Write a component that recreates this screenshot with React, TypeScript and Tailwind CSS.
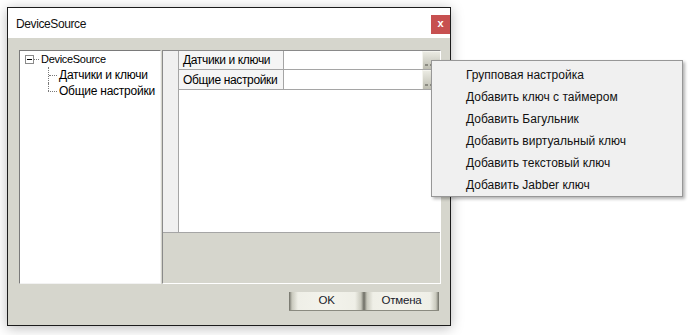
import React from "react";

const font = { fontFamily: '"Liberation Sans", Arial, sans-serif' };

const btnBg =
  "bg-[linear-gradient(to_right,#6d6d64_0px,#c9c9bd_3px,#efefe7_9px,#f3f3ec_50%,#efefe7_calc(100%-9px),#c9c9bd_calc(100%-3px),#6d6d64_100%)]";

function DialogButton({ label }: { label: string }) {
  return (
    <div
      className={`flex h-[19px] w-[75px] items-center justify-center border-b border-[#8a8a80] ${btnBg} text-[11.5px] tracking-[-0.2px] text-[#1a1a2a]`}
    >
      {label}
    </div>
  );
}

function EllipsisButton() {
  return (
    <div className="relative h-full w-[18px] border-l border-t border-[#f4f4ee] bg-[linear-gradient(to_bottom,#eaeae2,#bdbdb1)]">
      <div className="absolute bottom-[3px] left-[2px] flex gap-[2px]">
        <div className="h-[2px] w-[3px] border border-[#8c8c82]" />
        <div className="h-[2px] w-[3px] border border-[#8c8c82]" />
        <div className="h-[2px] w-[3px] border border-[#8c8c82]" />
      </div>
    </div>
  );
}

function GridRow({ name, h }: { name: string; h: string }) {
  return (
    <div className={`flex ${h} border-b border-[#a5a5a5]`}>
      <div className="flex w-[105px] items-center border-r border-[#a5a5a5] bg-[#f5f5f5] pl-[4px] text-[12px] tracking-[-0.35px] text-black">
        {name}
      </div>
      <div className="flex-1 bg-white" />
      <EllipsisButton />
    </div>
  );
}

const menuItems = [
  "Групповая настройка",
  "Добавить ключ с таймером",
  "Добавить Багульник",
  "Добавить виртуальный ключ",
  "Добавить текстовый ключ",
  "Добавить Jabber ключ",
];

export default function App() {
  return (
    <div className="relative h-[335px] w-[689px] overflow-hidden bg-white" style={font}>
      <div className="pl-[7px] pt-[7px]">
        <div className="flex h-[319px] w-[444px] flex-col border border-[#1c1c1c] bg-[#d6d6cd] shadow-[0_2px_12px_rgba(0,0,0,0.28)]">
          {/* Title bar */}
          <div className="flex h-[30px] items-start justify-between bg-white">
            <span className="pl-[8px] pt-[7px] text-[12px] tracking-[-0.4px] text-[#111]">DeviceSource</span>
            <div className="mt-[7px] flex h-[19px] w-[19px] items-center justify-center bg-[#c75050] pb-[2px] text-[11px] font-bold text-white">
              x
            </div>
          </div>

          {/* Body */}
          <div className="flex flex-1 flex-col pl-[11px] pr-[9px] pt-[12px]">
            <div className="flex h-[234px] gap-[1px]">
              {/* Tree */}
              <div className="flex w-[142px] flex-col border-b border-l border-r border-t border-b-[#f2f2f2] border-l-[#7a7a7a] border-r-[#f2f2f2] border-t-[#7a7a7a] bg-white text-black">
                <div className="flex h-[16px] items-center">
                  <div className="ml-[5px] flex h-[9px] w-[9px] items-center justify-center border border-[#8a8a8a] bg-white">
                    <div className="h-[1px] w-[5px] bg-black" />
                  </div>
                  <div className="w-[5px] border-t border-dotted border-[#7a7a7a]" />
                  <span className="ml-[2px] text-[11px] tracking-[-0.3px]">DeviceSource</span>
                </div>
                <div className="flex h-[16px] items-stretch">
                  <div className="ml-[28px] flex w-[9px] flex-col border-l border-dotted border-[#7a7a7a]">
                    <div className="h-[8px]" />
                    <div className="border-t border-dotted border-[#7a7a7a]" />
                  </div>
                  <span className="ml-[2px] flex items-center text-[12px] tracking-[-0.25px]">Датчики и ключи</span>
                </div>
                <div className="flex h-[16px] items-stretch">
                  <div className="ml-[28px] flex w-[9px] flex-col">
                    <div className="h-[8px] border-l border-dotted border-[#7a7a7a]" />
                    <div className="border-l border-t border-dotted border-[#7a7a7a]" />
                  </div>
                  <span className="ml-[2px] flex items-center text-[12px] tracking-[-0.25px]">Общие настройки</span>
                </div>
              </div>

              {/* Property grid */}
              <div className="flex w-[279px] flex-col border-b border-l border-r border-t border-b-white border-l-[#8a8a8a] border-r-white border-t-[#8a8a8a]">
                <div className="flex h-[181px]">
                  <div className="w-[16px] border-r border-[#a5a5a5] bg-[#f0f0f0]" />
                  <div className="flex flex-1 flex-col bg-white">
                    <GridRow name="Датчики и ключи" h="h-[19px]" />
                    <GridRow name="Общие настройки" h="h-[20px]" />
                  </div>
                </div>
                <div className="flex-1 border-t border-[#a5a5a5] bg-[#d6d6cd]" />
              </div>
            </div>

            {/* Buttons */}
            <div className="mr-[2px] mt-[8px] flex justify-end">
              <DialogButton label="OK" />
              <DialogButton label="Отмена" />
            </div>
          </div>
        </div>
      </div>

      {/* Context menu */}
      <div className="absolute left-[431px] top-[60px] flex h-[137px] w-[252px] flex-col border border-[#979797] bg-[#f0f0f0] pt-[3px] shadow-[2px_2px_3px_rgba(0,0,0,0.3)]">
        {menuItems.map((t) => (
          <div key={t} className="flex h-[22px] items-center pl-[34px] text-[12px] text-[#111]">
            {t}
          </div>
        ))}
      </div>
    </div>
  );
}
